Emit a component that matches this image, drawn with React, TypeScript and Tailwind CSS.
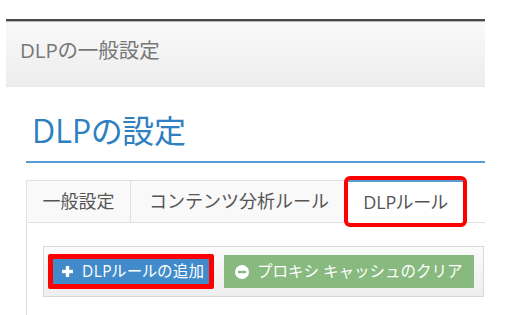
import React from "react";

const font = "font-['Open_Sans','Noto_Sans_CJK_JP',sans-serif]";
const palt = "[font-feature-settings:'palt']";

export default function App() {
  return (
    <div className={`w-[505px] h-[315px] bg-white overflow-hidden pt-[19px] ${font}`}>
      {/* header */}
      <div className="ml-[6px] w-[479px] h-[68px] border-t-2 border-[#4a4a4a] bg-gradient-to-b from-[#f9f9f9] to-[#ededed] border-b border-b-[#e6e6e6]">
        <div className="h-px bg-[#b5b5b5]" />
        <div className={`h-full flex items-center pl-[14px] pb-[8px] text-[20.5px] text-[#777] ${palt}`}>
          DLPの一般設定
        </div>
      </div>

      <div className="ml-[26px] w-[459px]">
        {/* title */}
        <div className={`mt-[25px] pl-[6px] text-[32px] leading-[38px] pb-[11px] border-b-2 border-[#5b9bd5] text-[#2f7fc1] ${palt}`}>
          DLPの設定
        </div>

        {/* tabs */}
        <div className="mt-[17px] flex border-b border-[#dde1e6] h-[43px] text-[18px] text-[#555]">
          <div className="w-[105px] h-[42px] flex items-center justify-center bg-[#f9f9f9] border border-b-0 border-[#dde1e6]">
            一般設定
          </div>
          <div className="w-[217px] h-[42px] flex items-center justify-center bg-[#f9f9f9] border-t border-r border-[#dde1e6]">
            コンテンツ分析ルール
          </div>
          <div className={`w-[115px] h-[43px] flex items-center justify-center bg-white border-t-2 border-[#5b9bd5] outline-4 outline-[#ff0000] rounded-[2px] ${palt}`}>
            DLPルール
          </div>
        </div>

        {/* panel */}
        <div className="border-l border-[#dde1e6] h-[100px] pt-[23px] pl-[16px]">
          <div className="w-[441px] h-[51px] border border-[#d9d9d9] bg-gradient-to-b from-[#fbfbfb] to-[#eeeeee] flex items-center pl-[4px] text-[15.5px] text-white">
            <div className="w-[166px] h-[35px] border-[5px] border-[#ff0000] rounded-[2px] bg-[#428bca] flex items-center pl-[9px]">
              <svg width="11" height="11" viewBox="0 0 11 11" className="mr-[9px] shrink-0">
                <rect x="3.8" y="0" width="3.4" height="11" fill="white" />
                <rect x="0" y="3.8" width="11" height="3.4" fill="white" />
              </svg>
              <span className={`${palt} tracking-[0.4px] whitespace-nowrap`}>DLPルールの追加</span>
            </div>
            <div className="ml-[10px] w-[250px] h-[33px] bg-[#88b97e] flex items-center pl-[11px]">
              <svg width="14" height="14" viewBox="0 0 14 14" className="mr-[8px] shrink-0">
                <circle cx="7" cy="7" r="7" fill="white" />
                <rect x="3" y="5.8" width="8" height="2.4" fill="#88b97e" />
              </svg>
              <span className="whitespace-nowrap">プロキシ キャッシュのクリア</span>
            </div>
          </div>
        </div>
      </div>
    </div>
  );
}
